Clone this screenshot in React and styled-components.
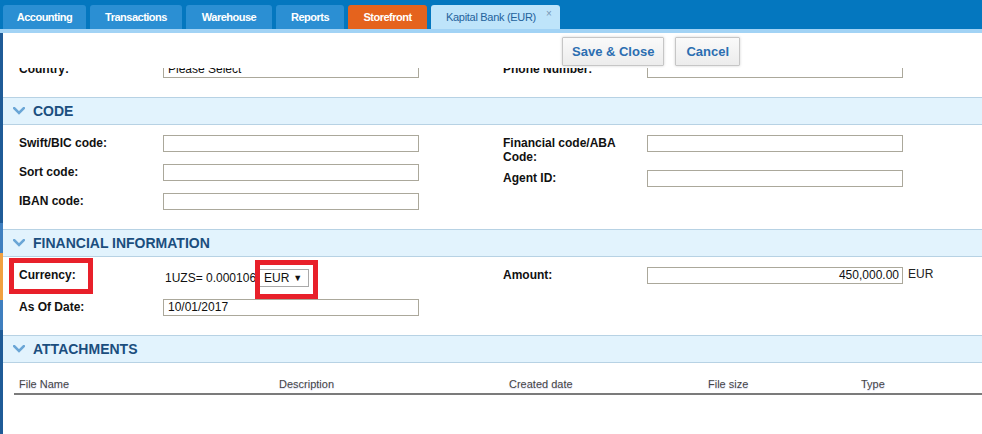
import React from "react";
import styled, { createGlobalStyle } from "styled-components";

const GlobalStyle = createGlobalStyle`
  html, body { margin: 0; padding: 0; background: #ffffff; }
  body {
    font-family: "Liberation Sans", Arial, sans-serif;
    width: 982px;
    height: 434px;
    overflow: hidden;
  }
  * { box-sizing: border-box; }
`;

const Shell = styled.div`
  width: 982px;
  height: 434px;
  display: flex;
  flex-direction: column;
  overflow: hidden;
`;

const TopBar = styled.div`
  height: 29px;
  flex: none;
  background: #0477bf;
  display: flex;
  align-items: flex-end;
  gap: 4px;
  padding-left: 3px;
`;

const Tab = styled.div`
  height: 24px;
  width: ${(p) => p.$w}px;
  border-radius: 3px 3px 0 0;
  background: ${(p) =>
    p.$variant === "orange" ? "#e5631d" : p.$variant === "active" ? "#bee4fa" : "#2b8fd3"};
  color: ${(p) => (p.$variant === "active" ? "#24629c" : "#ffffff")};
  font-size: 11px;
  font-weight: ${(p) => (p.$variant === "active" ? 400 : 700)};
  letter-spacing: ${(p) => (p.$variant === "active" ? "-0.3px" : "-0.5px")};
  display: flex;
  align-items: center;
  justify-content: ${(p) => (p.$variant === "active" ? "flex-start" : "center")};
  padding: ${(p) => (p.$variant === "active" ? "0 0 0 15px" : "0")};
  white-space: nowrap;
`;

const TabClose = styled.span`
  align-self: flex-start;
  margin-top: 4px;
  margin-left: 10px;
  font-size: 10px;
  line-height: 10px;
  color: #7896b3;
  letter-spacing: 0;
`;

const Band = styled.div`
  height: 4px;
  flex: none;
  background: #a2d3f5;
`;

const Main = styled.div`
  flex: 1;
  display: flex;
  min-height: 0;
`;

const Rail = styled.div`
  width: 3px;
  flex: none;
  background: linear-gradient(
    to bottom,
    #1f5b97 0,
    #1f5b97 190px,
    #3f7fbf 190px,
    #3f7fbf 220px,
    #f0a040 220px,
    #f0a040 267px,
    #3f7fbf 267px,
    #3f7fbf 297px,
    #1f5b97 297px
  );
`;

const Content = styled.div`
  flex: 1;
  display: flex;
  flex-direction: column;
  min-width: 0;
`;

const Toolbar = styled.div`
  height: 35px;
  flex: none;
  display: flex;
  align-items: flex-start;
  gap: 11px;
  padding: 4px 0 0 559px;
`;

const ActionButton = styled.button`
  height: 29px;
  padding: 0 ${(p) => p.$pad || 10}px;
  border: 1px solid #c6c6c6;
  border-radius: 1px;
  background: linear-gradient(to bottom, #fafafa, #ececec);
  box-shadow: 0 0 3px rgba(0, 0, 0, 0.18);
  color: #2b6eb1;
  font-family: "Liberation Sans", Arial, sans-serif;
  font-size: 13px;
  font-weight: 700;
  cursor: pointer;
`;

const PeekRow = styled.div`
  height: 10px;
  flex: none;
  overflow: hidden;
  display: flex;
  align-items: flex-end;
  margin-bottom: 19px;
`;

const Grid = styled.div`
  width: 100%;
  display: grid;
  grid-template-columns: 484px 1fr;
  padding-left: 16px;
`;

const Column = styled.div`
  display: flex;
  flex-direction: column;
  gap: ${(p) => p.$gap ?? 12}px;
`;

const Field = styled.div`
  display: flex;
  align-items: flex-start;
`;

const Label = styled.div`
  width: 144px;
  flex: none;
  padding-top: 1px;
  font-size: 12px;
  line-height: 14px;
  font-weight: 700;
  color: #111;
`;

const TextInput = styled.div`
  width: 256px;
  height: 17px;
  flex: none;
  border: 1px solid #aba89b;
  background: #fff;
  font-size: 12px;
  line-height: 15px;
  color: #111;
  padding: 0 ${(p) => (p.$right ? 3 : 4)}px;
  text-align: ${(p) => (p.$right ? "right" : "left")};
  white-space: nowrap;
  overflow: hidden;
`;

const Unit = styled.span`
  margin-left: 5px;
  font-size: 12px;
  line-height: 14px;
  color: #222;
`;

const Section = styled.section`
  display: flex;
  flex-direction: column;
  flex: none;
`;

const SectionHeader = styled.div`
  height: 28px;
  border-top: 1px solid #b7d2e4;
  border-bottom: 1px solid #b7d2e4;
  background: #e2f3fd;
  display: flex;
  align-items: center;
  gap: 8px;
  padding-left: 10px;
`;

const SectionTitle = styled.h3`
  margin: 0;
  font-size: 14px;
  font-weight: 700;
  color: #1b4e7e;
  letter-spacing: 0;
`;

const SectionBody = styled.div`
  position: relative;
  padding: ${(p) => p.$top ?? 10}px 0 ${(p) => p.$bottom ?? 19}px 0;
`;

const RateBox = styled.div`
  height: 20px;
  padding: 2px 0 0 2px;
  display: flex;
  align-items: center;
  gap: 3px;
  font-size: 12px;
  color: #111;
`;

const SelectBox = styled.div`
  width: 50px;
  height: 18px;
  border: 1px solid #a9a9a9;
  display: flex;
  align-items: center;
  justify-content: space-between;
  padding: 0 6px 0 4px;
  font-size: 12px;
  color: #111;
`;

const Caret = styled.span`
  font-size: 9px;
`;

const Annotation = styled.div`
  position: absolute;
  left: ${(p) => p.$x}px;
  top: ${(p) => p.$y}px;
  width: ${(p) => p.$w}px;
  height: ${(p) => p.$h}px;
  border: 5px solid #e8202a;
  pointer-events: none;
`;

const TableHead = styled.div`
  margin-left: 11px;
  display: grid;
  grid-template-columns: 260px 230px 199px 153px 1fr;
  border-bottom: 2px solid #7b7b7b;
`;

const HeadCell = styled.div`
  height: 18px;
  line-height: 18px;
  padding-left: 5px;
  font-size: 11px;
  color: #444;
  text-shadow: 0 1px 1px rgba(90, 90, 200, 0.25);
`;

const Chevron = () => (
  <svg width="12" height="8" viewBox="0 0 12 8" aria-hidden="true">
    <polyline
      points="1.2,1.2 6,6 10.8,1.2"
      fill="none"
      stroke="#6aa6d6"
      strokeWidth="2.6"
      strokeLinecap="square"
    />
  </svg>
);

const Header = ({ title }) => (
  <SectionHeader>
    <Chevron />
    <SectionTitle>{title}</SectionTitle>
  </SectionHeader>
);

const tabs = [
  { label: "Accounting", w: 83 },
  { label: "Transactions", w: 92 },
  { label: "Warehouse", w: 86 },
  { label: "Reports", w: 68 },
  { label: "Storefront", w: 79, variant: "orange" },
];

export default function App() {
  return (
    <>
      <GlobalStyle />
      <Shell>
        <TopBar>
          {tabs.map((t) => (
            <Tab key={t.label} $w={t.w} $variant={t.variant}>
              {t.label}
            </Tab>
          ))}
          <Tab $w={129} $variant="active">
            Kapital Bank (EUR)
            <TabClose>×</TabClose>
          </Tab>
        </TopBar>
        <Band />
        <Main>
          <Rail />
          <Content>
            <Toolbar>
              <ActionButton $pad={9}>Save &amp; Close</ActionButton>
              <ActionButton $pad={10}>Cancel</ActionButton>
            </Toolbar>

            <PeekRow>
              <Grid>
                <Field>
                  <Label>Country:</Label>
                  <TextInput>Please Select</TextInput>
                </Field>
                <Field>
                  <Label>Phone Number:</Label>
                  <TextInput />
                </Field>
              </Grid>
            </PeekRow>

            <Section>
              <Header title="CODE" />
              <SectionBody>
                <Grid>
                  <Column $gap={12}>
                    <Field>
                      <Label>Swift/BIC code:</Label>
                      <TextInput />
                    </Field>
                    <Field>
                      <Label>Sort code:</Label>
                      <TextInput />
                    </Field>
                    <Field>
                      <Label>IBAN code:</Label>
                      <TextInput />
                    </Field>
                  </Column>
                  <Column $gap={6}>
                    <Field>
                      <Label>
                        Financial code/ABA
                        <br />
                        Code:
                      </Label>
                      <TextInput />
                    </Field>
                    <Field>
                      <Label>Agent ID:</Label>
                      <TextInput />
                    </Field>
                  </Column>
                </Grid>
              </SectionBody>
            </Section>

            <Section>
              <Header title="FINANCIAL INFORMATION" />
              <SectionBody>
                <Grid>
                  <Column $gap={12}>
                    <Field>
                      <Label>Currency:</Label>
                      <RateBox>
                        <span>1UZS= 0.000106</span>
                        <SelectBox>
                          <span>EUR</span>
                          <Caret>▼</Caret>
                        </SelectBox>
                      </RateBox>
                    </Field>
                    <Field>
                      <Label>As Of Date:</Label>
                      <TextInput>10/01/2017</TextInput>
                    </Field>
                  </Column>
                  <Column>
                    <Field>
                      <Label>Amount:</Label>
                      <TextInput $right>450,000.00</TextInput>
                      <Unit>EUR</Unit>
                    </Field>
                  </Column>
                </Grid>
                <Annotation $x={6} $y={1} $w={84} $h={36} />
                <Annotation $x={252} $y={3} $w={63} $h={39} />
              </SectionBody>
            </Section>

            <Section>
              <Header title="ATTACHMENTS" />
              <SectionBody $top={12} $bottom={0}>
                <TableHead>
                  <HeadCell>File Name</HeadCell>
                  <HeadCell>Description</HeadCell>
                  <HeadCell>Created date</HeadCell>
                  <HeadCell>File size</HeadCell>
                  <HeadCell>Type</HeadCell>
                </TableHead>
              </SectionBody>
            </Section>
          </Content>
        </Main>
      </Shell>
    </>
  );
}
